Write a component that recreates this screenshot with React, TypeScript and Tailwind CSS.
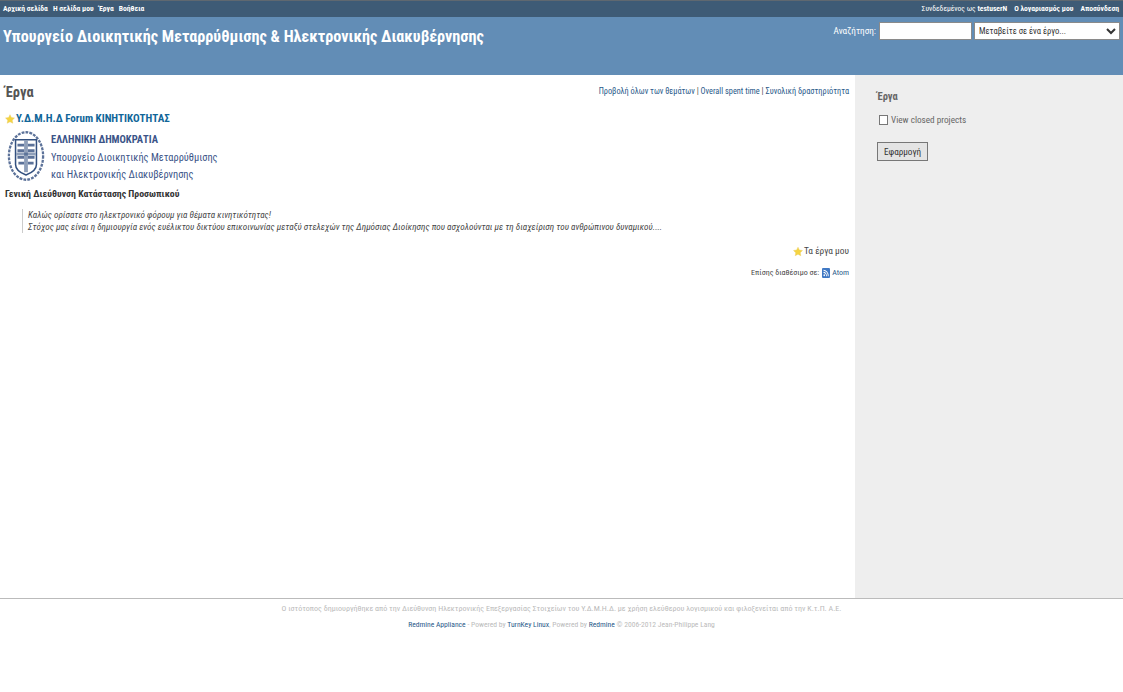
import React from 'react';

const font = "font-['Liberation_Sans_Narrow','Roboto_Condensed','DejaVu_Sans_Condensed',sans-serif]";

function Star({ className }: { className: string }) {
  return (
    <svg viewBox="0 0 16 16" className={className}>
      <path
        d="M8 1l2.2 4.6 5 .7-3.6 3.5.9 5L8 12.4l-4.5 2.4.9-5L.8 6.3l5-.7z"
        fill="#f5d442"
        stroke="#e8c95a"
        strokeWidth="0.6"
      />
    </svg>
  );
}

function Emblem() {
  return (
    <svg viewBox="0 0 40 54" className="w-[38px] h-[54px] shrink-0">
      <ellipse cx="20" cy="27" rx="18" ry="25" fill="none" stroke="#5c7299" strokeWidth="2.4" strokeDasharray="3 1.2" />
      <path d="M9 10h22v26q0 7-11 11q-11-4-11-11z" fill="#fff" stroke="#33507f" strokeWidth="1.6" />
      <path d="M11 14h7v3h-7zM22 14h7v3h-7zM11 20h7v3h-7zM22 20h7v3h-7zM11 27h7v3h-7zM22 27h7v3h-7zM12 33h6v3h-6zM22 33h6v3h-6z" fill="#5c7299" />
      <path d="M18 11h4v33h-4z" fill="#33507f" opacity="0.55" />
      <path d="M10 23.5h20v3H10z" fill="#33507f" opacity="0.55" />
    </svg>
  );
}

function FeedIcon() {
  return (
    <svg viewBox="0 0 16 16" className="w-[8px] h-[10px] mr-[2px]" preserveAspectRatio="none">
      <rect width="16" height="16" rx="2" fill="#3f78c4" />
      <circle cx="4.5" cy="11.5" r="1.6" fill="#fff" />
      <path d="M3 7a6 6 0 0 1 6 6M3 3.5a9.5 9.5 0 0 1 9.5 9.5" stroke="#fff" strokeWidth="1.7" fill="none" />
    </svg>
  );
}

export default function App() {
  return (
    <div className={`${font} min-h-[692px] bg-white flex flex-col text-[#484848] text-[9.4px]`}>
      {/* top menu */}
      <div className="h-[17px] bg-[#3e5b76] border-t border-[#5f6870] flex items-center justify-between pl-[3px] pr-[4px] text-white font-bold text-[7.6px]">
        <div className="flex gap-[5px]">
          <span>Αρχική σελίδα</span>
          <span>Η σελίδα μου</span>
          <span>Έργα</span>
          <span>Βοήθεια</span>
        </div>
        <div className="flex gap-[7px]">
          <span className="font-normal">
            Συνδεδεμένος ως <span className="font-bold">testuserN</span>
          </span>
          <span>Ο λογαριασμός μου</span>
          <span>Αποσύνδεση</span>
        </div>
      </div>

      {/* header */}
      <div className="h-[58px] bg-[#628db6] flex items-start justify-between pl-[3px] pr-[3px] text-white">
        <h1 className="text-[16.2px] font-bold leading-[21px] mt-[9px]">
          Υπουργείο Διοικητικής Μεταρρύθμισης &amp; Ηλεκτρονικής Διακυβέρνησης
        </h1>
        <div className="flex items-center mt-[5px] text-[9.2px]">
          <span>Αναζήτηση:</span>
          <input className="w-[93px] h-[18px] ml-[3px] bg-white border border-[#8a8a8a]" />
          <select className="w-[146px] h-[18px] ml-[2px] pl-0 bg-white border border-[#8a8a8a] text-[#333] text-[8.6px]">
            <option>Μεταβείτε σε ένα έργο...</option>
          </select>
        </div>
      </div>

      {/* main */}
      <div className="h-[523px] flex">
        <div className="flex-1 flex flex-col pl-[5px] pr-[6px] pt-[9px]">
          <div className="flex justify-between items-start">
            <h2 className="text-[14.5px] font-bold text-[#555] leading-[18px]">Έργα</h2>
            <div className="text-[8.3px] leading-[12px] mt-[1px]">
              <a className="text-[#2a5a8a]">Προβολή όλων των θεμάτων</a> |{' '}
              <a className="text-[#2a5a8a]">Overall spent time</a> |{' '}
              <a className="text-[#2a5a8a]">Συνολική δραστηριότητα</a>
            </div>
          </div>

          <div className="flex items-center mt-[10px] h-[14px]">
            <Star className="w-[10px] h-[10px] mr-[1px]" />
            <a className="text-[11px] font-bold text-[#169]">Υ.Δ.Μ.Η.Δ Forum ΚΙΝΗΤΙΚΟΤΗΤΑΣ</a>
          </div>

          <div className="flex items-start mt-[3px] pl-[2px]">
            <Emblem />
            <div className="ml-[6px] text-[#3b5488]">
              <div className="text-[10.5px] font-bold leading-[14px] mt-[4px]">ΕΛΛΗΝΙΚΗ ΔΗΜΟΚΡΑΤΙΑ</div>
              <div className="text-[10.4px] leading-[17px] mt-[2px]">Υπουργείο Διοικητικής Μεταρρύθμισης</div>
              <div className="text-[10.4px] leading-[17px]">και Ηλεκτρονικής Διακυβέρνησης</div>
            </div>
          </div>
          <div className="text-[9.8px] font-bold text-[#333] leading-[12px] mt-[5px]">
            Γενική Διεύθυνση Κατάστασης Προσωπικού
          </div>

          <div className="mt-[9px] ml-[17px] pl-[5px] border-l border-[#ccc] italic text-[9.13px] leading-[12px]">
            <div>Καλώς ορίσατε στο ηλεκτρονικό φόρουμ για θέματα κινητικότητας!</div>
            <div>
              Στόχος μας είναι η δημιουργία ενός ευέλικτου δικτύου επικοινωνίας μεταξύ στελεχών της Δημόσιας Διοίκησης που ασχολούνται με τη διαχείριση του ανθρώπινου δυναμικού....
            </div>
          </div>

          <div className="flex justify-end items-center mt-[12px] h-[13px]">
            <Star className="w-[10px] h-[11px] mr-[1px]" />
            <span>Τα έργα μου</span>
          </div>
          <div className="flex justify-end items-center mt-[9px] h-[12px] text-[8px]">
            <span className="mr-[3px]">Επίσης διαθέσιμο σε:</span>
            <FeedIcon />
            <a className="text-[#2a5a8a]">Atom</a>
          </div>
        </div>

        {/* sidebar */}
        <div className="w-[268px] bg-[#eeeeee] pl-[22px] pt-[15px] text-[#666]">
          <h3 className="text-[10.5px] font-bold leading-[14px]">Έργα</h3>
          <label className="flex items-center mt-[9px] h-[14px]">
            <input type="checkbox" className="w-[9px] h-[10px] mr-[3px] ml-[2px] appearance-none border border-[#777] bg-white" />
            <span className="text-[9.2px]">View closed projects</span>
          </label>
          <button className="block mt-[15px] w-[51px] h-[19px] bg-[#e4e4e4] border border-[#777] text-[9.2px] text-[#333]">
            Εφαρμογή
          </button>
        </div>
      </div>

      {/* footer */}
      <div className="border-t border-[#bbb] text-center text-[#bbb] leading-[16px] pt-[2px]">
        <div className="text-[8.04px]">
          Ο ιστότοπος δημιουργήθηκε από την Διεύθυνση Ηλεκτρονικής Επεξεργασίας Στοιχείων του Υ.Δ.Μ.Η.Δ. με χρήση ελεύθερου λογισμικού και φιλοξενείται από την Κ.τ.Π. Α.Ε.
        </div>
        <div className="text-[7.6px]">
          <a className="text-[#2a5a8a]">Redmine Appliance</a> - Powered by{' '}
          <a className="text-[#2a5a8a]">TurnKey Linux</a>, Powered by{' '}
          <a className="text-[#2a5a8a]">Redmine</a> © 2006-2012 Jean-Philippe Lang
        </div>
      </div>
    </div>
  );
}
